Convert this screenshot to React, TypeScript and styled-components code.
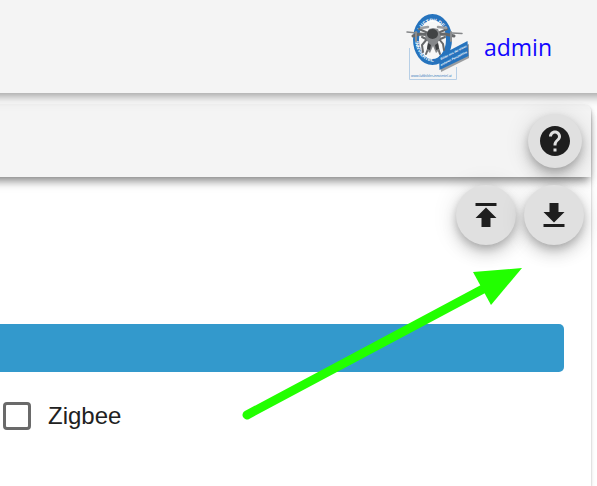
import React from "react";
import styled, { createGlobalStyle } from "styled-components";

const GlobalStyle = createGlobalStyle`
  * { box-sizing: border-box; }
  body { margin: 0; background: #fff; font-family: "Liberation Sans", Arial, sans-serif; color: #212121; }
`;

const Page = styled.div`
  position: relative;
  display: flex;
  flex-direction: column;
  height: 100vh;
  overflow: hidden;
`;

const barShadow = `0 3px 9px rgba(0, 0, 0, 0.3), 0 4px 15px rgba(0, 0, 0, 0.12)`;

const Header = styled.header`
  position: relative;
  z-index: 2;
  flex: none;
  display: flex;
  align-items: center;
  justify-content: flex-end;
  gap: 14px;
  height: 93px;
  margin-left: -16px;
  margin-right: -16px;
  padding-right: 61px;
  background: #f4f4f4;
  box-shadow: ${barShadow};
`;

const UserLink = styled.a`
  font-family: "Open Sans", "Noto Sans", sans-serif;
  font-size: 23px;
  line-height: 32px;
  color: #1206ff;
  text-decoration: none;
`;

const Main = styled.main`
  flex: 1;
  display: flex;
  margin-left: -16px;
  padding: 12px 6px 0 0;
`;

const Card = styled.section`
  flex: 1;
  border-top-right-radius: 6px;
  background: #fff;
  box-shadow: 0 3px 2px -2px rgba(0, 0, 0, 0.2), 0 1px 2px rgba(0, 0, 0, 0.24), 0 2px 5px rgba(0, 0, 0, 0.12);
`;

const Toolbar = styled.div`
  display: flex;
  justify-content: flex-end;
  padding: 9px;
  border-top-right-radius: 6px;
  background: #f4f4f4;
  box-shadow: 0 5px 8px -2px rgba(0, 0, 0, 0.4), 0 8px 12px -3px rgba(0, 0, 0, 0.16);
`;

const RoundButton = styled.button<{ $size: number }>`
  display: flex;
  align-items: center;
  justify-content: center;
  width: ${(p) => p.$size}px;
  height: ${(p) => p.$size}px;
  padding: 0;
  border: 0;
  border-radius: 50%;
  background: #e0e0e0;
  color: #1e1e1e;
  cursor: pointer;
  box-shadow: 0 4px 8px -1px rgba(0, 0, 0, 0.2), 0 9px 15px rgba(0, 0, 0, 0.14), 0 2px 27px rgba(0, 0, 0, 0.12);
`;

const Icon = styled.svg<{ $flipped?: boolean }>`
  width: 36px;
  height: 36px;
  fill: currentColor;
  transform: ${(p) => (p.$flipped ? "rotate(180deg)" : "none")};
`;

const Actions = styled.div`
  display: flex;
  justify-content: flex-end;
  gap: 8px;
  padding: 8px 7px 0 0;
`;

const SectionBar = styled.div`
  height: 48px;
  margin: 79px 27px 0 0;
  border-radius: 0 5px 5px 0;
  background: #3399cc;
`;

const Option = styled.label`
  display: inline-flex;
  align-items: center;
  gap: 17px;
  padding: 28px 3px 28px 19px;
  font-size: 24px;
  line-height: 32px;
`;

const Checkbox = styled.input`
  appearance: none;
  width: 28px;
  height: 28px;
  margin: 0;
  border: 3px solid #6a6a6a;
  border-radius: 4px;
  background: #fff;
  &:checked { background: #3399cc; }
`;

const LogoArt = styled.svg`
  flex: none;
  width: 65px;
  height: 72px;
`;

const Pointer = styled.svg`
  position: absolute;
  z-index: 3;
  top: 260px;
  right: 70px;
  width: 290px;
  height: 170px;
  pointer-events: none;
`;

const publishPath = "M5 4v2h14V4H5zm0 10h4v6h6v-6h4l-7-7-7 7z";
const helpPath =
  "M12 2C6.48 2 2 6.48 2 12s4.48 10 10 10 10-4.48 10-10S17.52 2 12 2zm1 17h-2v-2h2v2zm2.07-7.75l-.9.92C13.45 12.9 13 13.5 13 15h-2v-.5c0-1.1.45-2.1 1.17-2.83l1.24-1.26c.37-.36.59-.86.59-1.41 0-1.1-.9-2-2-2s-2 .9-2 2H8c0-2.21 1.79-4 4-4s4 1.79 4 4c0 .88-.36 1.68-.93 2.25z";

function Logo() {
  return (
    <LogoArt viewBox="405 10 65 72" role="img" aria-label="Luftbilder Innviertel">
      <defs>
        <path id="ring-top" d="M417.500 42a15 21 0 0 1 30 0" />
        <path id="ring-bottom" d="M414.500 35a18 25.500 0 0 0 36 0" />
      </defs>
      <path d="M409.5 47v31.500h47V66" fill="none" stroke="#b7cfe6" />
      <ellipse cx="432.500" cy="38.500" rx="16.500" ry="22.500" fill="#f7f7f7" stroke="#2673bd" strokeWidth="6" />
      <g fill="#fff" fontFamily="Liberation Sans, sans-serif" fontSize="5" fontWeight="700">
        <text><textPath href="#ring-top" startOffset="50%" textAnchor="middle">LUFTBILDER</textPath></text>
        <text><textPath href="#ring-bottom" startOffset="30%" textAnchor="middle">INNVIERTEL</textPath></text>
      </g>
      <g fill="none" stroke="#66686a" strokeLinecap="round">
        <path d="M407 31l10 1M452 32l10 .500" stroke="#858789" strokeWidth="1.500" />
        <path d="M413 35l7-2 12 1 13-1 9 2" strokeWidth="3" />
        <path d="M416 31v9M451 31v9" stroke="#8a8c8e" strokeWidth="2" />
        <path d="M419 28l9 4M447 28l-9 4M422 36l6 3M445 36l-7 3" strokeWidth="2" />
        <path d="M421 27l7-1M438 26l8 1" stroke="#9b9da0" strokeWidth="2.500" />
        <path d="M427 38l-5 6 1 7M439 38l4 5 1 6M430 40l-2 8-2 5M436 40l2 7 2 6" strokeWidth="2" />
      </g>
      <path d="M425 36l4-8 4-1 5 1 3 8-3 5 1 8-3 3-3-7-3 7-3-3 1-8z" fill="#85878a" />
      <ellipse cx="432.500" cy="33" rx="5.500" ry="5" fill="#414345" />
      <path d="M428 42l3 2-1 5-3-1zM438 42l-3 2 1 5 3-1z" fill="#3d3f41" />
      <path d="M440 57l29-14v14l-28 14z" fill="#9c9ea0" />
      <path d="M439 55l28.500-15 1 15-29 14z" fill="#2673bd" />
      <g fill="#fff" fontFamily="Liberation Sans, sans-serif" fontSize="3" fontWeight="700" fontStyle="italic">
        <text transform="translate(441 59) rotate(-27)">Bilder aus der etwas</text>
        <text transform="translate(441 65) rotate(-27)">anderen Perspektive</text>
      </g>
      <text x="411" y="76" fill="#3c7fc0" fontFamily="Liberation Sans, sans-serif" fontSize="3.500" fontStyle="italic">
        www.luftbilder-innviertel.at
      </text>
    </LogoArt>
  );
}

export default function App() {
  return (
    <Page>
      <GlobalStyle />
      <Header>
        <Logo />
        <UserLink href="#admin">admin</UserLink>
      </Header>
      <Main>
        <Card>
          <Toolbar>
            <RoundButton $size={54} type="button" aria-label="Help">
              <Icon viewBox="0 0 24 24"><path d={helpPath} /></Icon>
            </RoundButton>
          </Toolbar>
          <Actions>
            <RoundButton $size={60} type="button" aria-label="Upload">
              <Icon viewBox="0 0 24 24"><path d={publishPath} /></Icon>
            </RoundButton>
            <RoundButton $size={60} type="button" aria-label="Download">
              <Icon viewBox="0 0 24 24" $flipped><path d={publishPath} /></Icon>
            </RoundButton>
          </Actions>
          <SectionBar />
          <Option>
            <Checkbox type="checkbox" />
            Zigbee
          </Option>
        </Card>
      </Main>
      <Pointer viewBox="237 260 290 170" aria-hidden="true">
        <path d="M247 415L484 288.500" stroke="#22ff00" strokeWidth="9" strokeLinecap="round" />
        <path d="M522 268l-49 4 18 33z" fill="#22ff00" />
      </Pointer>
    </Page>
  );
}
